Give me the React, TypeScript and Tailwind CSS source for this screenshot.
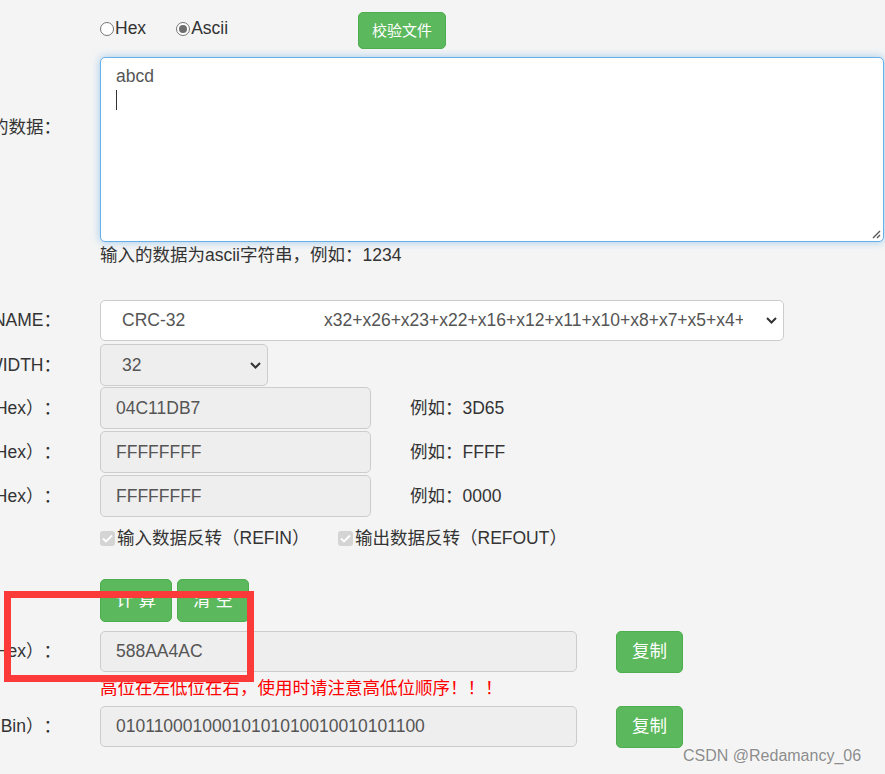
import React from 'react';

const FONT = '"Liberation Sans", "Noto Sans CJK SC", sans-serif';

function Label({ text }: { text: string }) {
  return (
    <div className="flex w-[61px] shrink-0 justify-end whitespace-nowrap text-[#333]">
      {text}
    </div>
  );
}

function Chevron() {
  return (
    <svg width="11" height="7" viewBox="0 0 11 7" className="shrink-0">
      <path d="M1 1 L5.5 5.5 L10 1" fill="none" stroke="#333" strokeWidth="2" />
    </svg>
  );
}

function Radio({ checked, label }: { checked?: boolean; label: string }) {
  return (
    <div className="flex items-center">
      <span className="flex h-[14px] w-[14px] items-center justify-center rounded-full border border-[#767676] bg-white">
        {checked && <span className="h-[8px] w-[8px] rounded-full bg-[#6e6e6e]" />}
      </span>
      <span className="ml-[1px]">{label}</span>
    </div>
  );
}

function Check({ label }: { label: string }) {
  return (
    <div className="flex items-center">
      <span className="flex h-[15px] w-[15px] items-center justify-center rounded-[3px] bg-[#d4d4d4]">
        <svg width="11" height="9" viewBox="0 0 11 9">
          <path d="M1 4.5 L4 7.5 L10 1.5" fill="none" stroke="#fff" strokeWidth="1.8" />
        </svg>
      </span>
      <span className="ml-[2px]">{label}</span>
    </div>
  );
}

function HexRow({ label, value, example }: { label: string; value: string; example: string }) {
  return (
    <div className="mt-[2px] flex h-[42px] items-center">
      <Label text={label} />
      <div className="ml-[39px] flex h-full w-[271px] items-center rounded-[5px] border border-[#ccc] bg-[#eee] px-[15px] text-[#555]">
        {value}
      </div>
      <div className="ml-[39px] text-[#333]">{example}</div>
    </div>
  );
}

function GreenButton({ children, className }: { children: React.ReactNode; className: string }) {
  return (
    <div className={`flex items-center justify-center rounded-[5px] border border-[#4cae4c] bg-[#5cb85c] text-white ${className}`}>
      {children}
    </div>
  );
}

export default function App() {
  return (
    <div
      className="relative min-h-screen overflow-hidden bg-[#f4f4f4] text-[17.5px] leading-[21px] text-[#333] [text-spacing-trim:space-all]"
      style={{ fontFamily: FONT }}
    >
      <div className="pt-[12px]">
        {/* data input group */}
        <div className="flex items-center">
          <Label text="需要校验的数据：" />
          <div className="ml-[39px] flex flex-col">
            <div className="flex h-[37px] items-center">
              <div className="mb-[4px] flex items-center">
                <Radio label="Hex" />
                <div className="ml-[30px]">
                  <Radio checked label="Ascii" />
                </div>
              </div>
              <GreenButton className="ml-[130px] h-[37px] w-[88px] text-[15px]">校验文件</GreenButton>
            </div>
            <div className="relative mt-[8px] h-[185px] w-[784px] rounded-[5px] border border-[#66afe9] bg-white px-[15px] pt-[8px] text-[#555] shadow-[0_0_8px_rgba(102,175,233,0.6)]">
              <div>abcd</div>
              <div className="mt-[3px] h-[20px] w-[1px] bg-[#333]" />
              <svg width="10" height="10" viewBox="0 0 10 10" className="absolute bottom-[2px] right-[2px]">
                <path d="M9 2 L2 9 M9 6 L6 9" stroke="#555" strokeWidth="1.4" />
              </svg>
            </div>
          </div>
        </div>
        <div className="mt-[3px] pl-[100px]">输入的数据为ascii字符串，例如：1234</div>

        {/* NAME */}
        <div className="mt-[34px] flex h-[41px] items-center">
          <Label text="参数模型 NAME：" />
          <div className="ml-[39px] flex h-full w-[684px] items-center rounded-[5px] border border-[#ccc] bg-white pl-[21px] pr-[6px] text-[#555]">
            <span className="w-[202px] shrink-0">CRC-32</span>
            <span className="w-[419px] shrink-0 overflow-hidden whitespace-nowrap">
              x32+x26+x23+x22+x16+x12+x11+x10+x8+x7+x5+x4+x2+x+1
            </span>
            <span className="ml-auto">
              <Chevron />
            </span>
          </div>
        </div>

        {/* WIDTH */}
        <div className="mt-[3px] flex h-[42px] items-center">
          <Label text="宽度 WIDTH：" />
          <div className="ml-[39px] flex h-full w-[168px] items-center rounded-[5px] border border-[#ccc] bg-[#eee] pl-[21px] pr-[6px] text-[#555]">
            <span>32</span>
            <span className="ml-auto">
              <Chevron />
            </span>
          </div>
        </div>

        <div className="-mt-[1px]">
          <HexRow label="多项式 POLY（Hex）：" value="04C11DB7" example="例如：3D65" />
          <HexRow label="初始值 INIT（Hex）：" value="FFFFFFFF" example="例如：FFFF" />
          <HexRow label="结果异或值 XOROUT（Hex）：" value="FFFFFFFF" example="例如：0000" />
        </div>

        {/* checkboxes */}
        <div className="mt-[11px] flex h-[21px] items-center pl-[100px]">
          <div className="w-[238px]">
            <Check label="输入数据反转（REFIN）" />
          </div>
          <Check label="输出数据反转（REFOUT）" />
        </div>

        {/* actions */}
        <div className="mt-[30px] flex h-[43px] gap-[5px] pl-[100px]">
          <GreenButton className="h-full w-[72px]">计 算</GreenButton>
          <GreenButton className="h-full w-[72px]">清 空</GreenButton>
        </div>

        {/* result hex */}
        <div className="mt-[9px] flex h-[41px] items-center">
          <Label text="校验计算结果（Hex）：" />
          <div className="ml-[39px] flex h-full w-[477px] items-center rounded-[5px] border border-[#ccc] bg-[#eee] px-[15px] text-[#555]">
            588AA4AC
          </div>
          <GreenButton className="ml-[39px] h-[42px] w-[67px]">复制</GreenButton>
        </div>
        <div className="mt-[6px] pl-[100px] text-[#ff0000]">高位在左低位在右，使用时请注意高低位顺序！！！</div>

        {/* result bin */}
        <div className="mt-[7px] flex h-[41px] items-center">
          <Label text="校验计算结果（Bin）：" />
          <div className="ml-[39px] flex h-full w-[477px] items-center rounded-[5px] border border-[#ccc] bg-[#eee] px-[15px] text-[#555]">
            01011000100010101010010010101100
          </div>
          <GreenButton className="ml-[39px] h-[42px] w-[67px]">复制</GreenButton>
        </div>
      </div>

      {/* highlight box drawn over the screenshot */}
      <div className="absolute left-[4px] top-[591px] h-[91px] w-[250px] border-[7px] border-[#fc3a3a]" />

      {/* watermark */}
      <div className="absolute left-[683px] top-[745px] text-[16px] text-[#8c8c8c] [text-shadow:0_0_2px_#fff]">
        CSDN @Redamancy_06
      </div>
    </div>
  );
}
